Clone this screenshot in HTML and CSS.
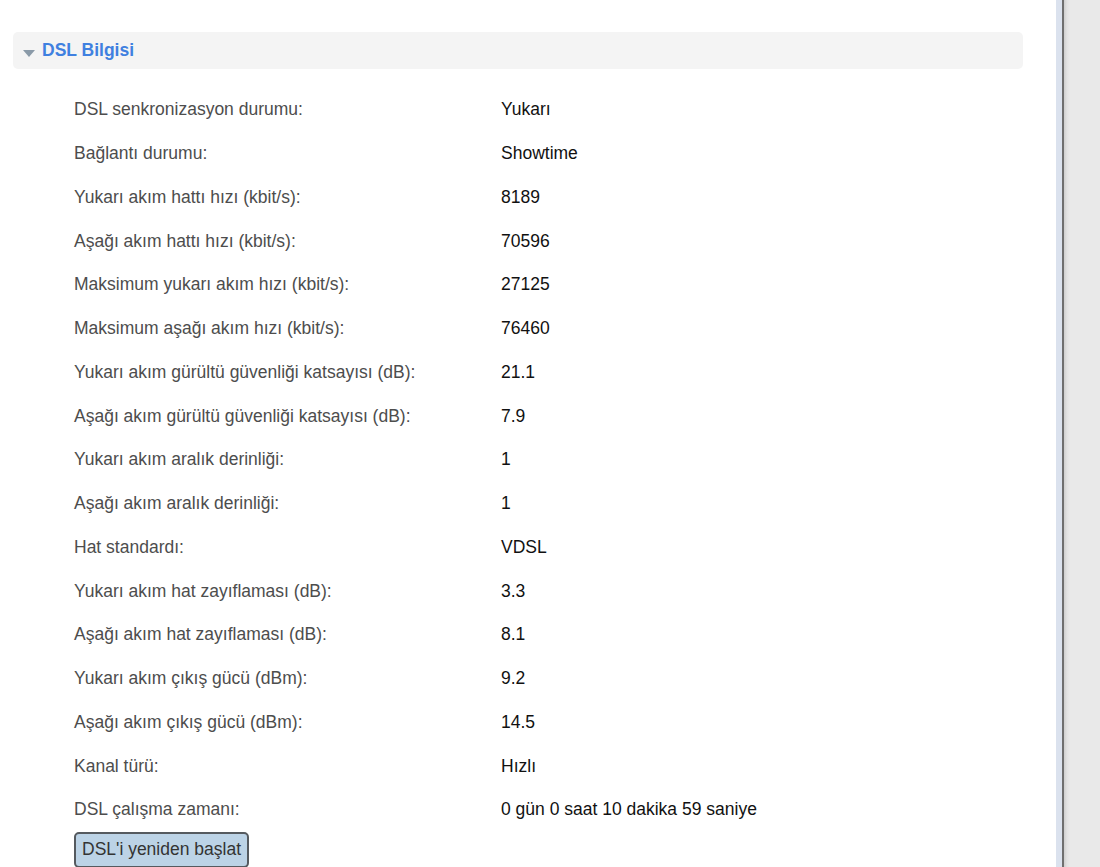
FILE: index.html
```html
<!DOCTYPE html>
<html>
<head>
<meta charset="utf-8">
<link rel="stylesheet" href="styles.css">
</head>
<body>
<div class="page">
  <div class="main">
    <div class="section-head">
      <span class="tri"></span>
      <span class="title">DSL Bilgisi</span>
    </div>
    <div class="info">
      <div class="row"><span class="lbl">DSL senkronizasyon durumu:</span><span class="val">Yukarı</span></div>
      <div class="row"><span class="lbl">Bağlantı durumu:</span><span class="val">Showtime</span></div>
      <div class="row"><span class="lbl">Yukarı akım hattı hızı (kbit/s):</span><span class="val">8189</span></div>
      <div class="row"><span class="lbl">Aşağı akım hattı hızı (kbit/s):</span><span class="val">70596</span></div>
      <div class="row"><span class="lbl">Maksimum yukarı akım hızı (kbit/s):</span><span class="val">27125</span></div>
      <div class="row"><span class="lbl">Maksimum aşağı akım hızı (kbit/s):</span><span class="val">76460</span></div>
      <div class="row"><span class="lbl">Yukarı akım gürültü güvenliği katsayısı (dB):</span><span class="val">21.1</span></div>
      <div class="row"><span class="lbl">Aşağı akım gürültü güvenliği katsayısı (dB):</span><span class="val">7.9</span></div>
      <div class="row"><span class="lbl">Yukarı akım aralık derinliği:</span><span class="val">1</span></div>
      <div class="row"><span class="lbl">Aşağı akım aralık derinliği:</span><span class="val">1</span></div>
      <div class="row"><span class="lbl">Hat standardı:</span><span class="val">VDSL</span></div>
      <div class="row"><span class="lbl">Yukarı akım hat zayıflaması (dB):</span><span class="val">3.3</span></div>
      <div class="row"><span class="lbl">Aşağı akım hat zayıflaması (dB):</span><span class="val">8.1</span></div>
      <div class="row"><span class="lbl">Yukarı akım çıkış gücü (dBm):</span><span class="val">9.2</span></div>
      <div class="row"><span class="lbl">Aşağı akım çıkış gücü (dBm):</span><span class="val">14.5</span></div>
      <div class="row"><span class="lbl">Kanal türü:</span><span class="val">Hızlı</span></div>
      <div class="row"><span class="lbl">DSL çalışma zamanı:</span><span class="val">0 gün 0 saat 10 dakika 59 saniye</span></div>
    </div>
    <div class="actions">
      <button class="btn">DSL'i yeniden başlat</button>
    </div>
  </div>
  <div class="edge"></div>
  <div class="side"></div>
</div>
</body>
</html>
```
FILE: styles.css
```css
html, body {
  margin: 0;
  padding: 0;
  height: 100%;
  overflow: hidden;
}
body {
  font-family: "Liberation Sans", Arial, sans-serif;
  background: #ffffff;
}
.page {
  display: flex;
  height: 867px;
}
.main {
  width: 1056px;
  flex: none;
  background: #ffffff;
  padding-top: 32px;
  box-sizing: border-box;
}
.edge {
  width: 8px;
  flex: none;
  background: linear-gradient(to right, #dbe2ee 0, #dbe2ee 6px, #6f6f6f 6px, #6f6f6f 8px);
}
.side {
  flex: 1;
  background: linear-gradient(to right, #cfcfcf 0, #e2e2e2 3px, #e9e9e9 6px, #e9e9e9 100%);
}
.section-head {
  margin: 0 33px 0 13px;
  height: 37px;
  background: #f4f4f4;
  border-radius: 5px;
  display: flex;
  align-items: center;
}
.tri {
  width: 0;
  height: 0;
  border-left: 6px solid transparent;
  border-right: 6px solid transparent;
  border-top: 7px solid #8a9aa8;
  margin-left: 10px;
  margin-top: 5px;
}
.title {
  margin-left: 7px;
  font-size: 17.5px;
  font-weight: bold;
  color: #3f80e0;
}
.info {
  margin-top: 19px;
  padding-left: 74px;
}
.row {
  display: grid;
  grid-template-columns: 427px auto;
  height: 43.75px;
  align-items: center;
  font-size: 17.5px;
}
.lbl {
  color: #4d4d4d;
}
.val {
  color: #111111;
}
.actions {
  padding-left: 74px;
}
.btn {
  font-family: "Liberation Sans", Arial, sans-serif;
  font-size: 17.5px;
  color: #333333;
  background: #bcd3e6;
  border: 2px solid #555a5f;
  border-radius: 5px;
  height: 36px;
  padding: 0 6px;
  box-sizing: border-box;
}
```
